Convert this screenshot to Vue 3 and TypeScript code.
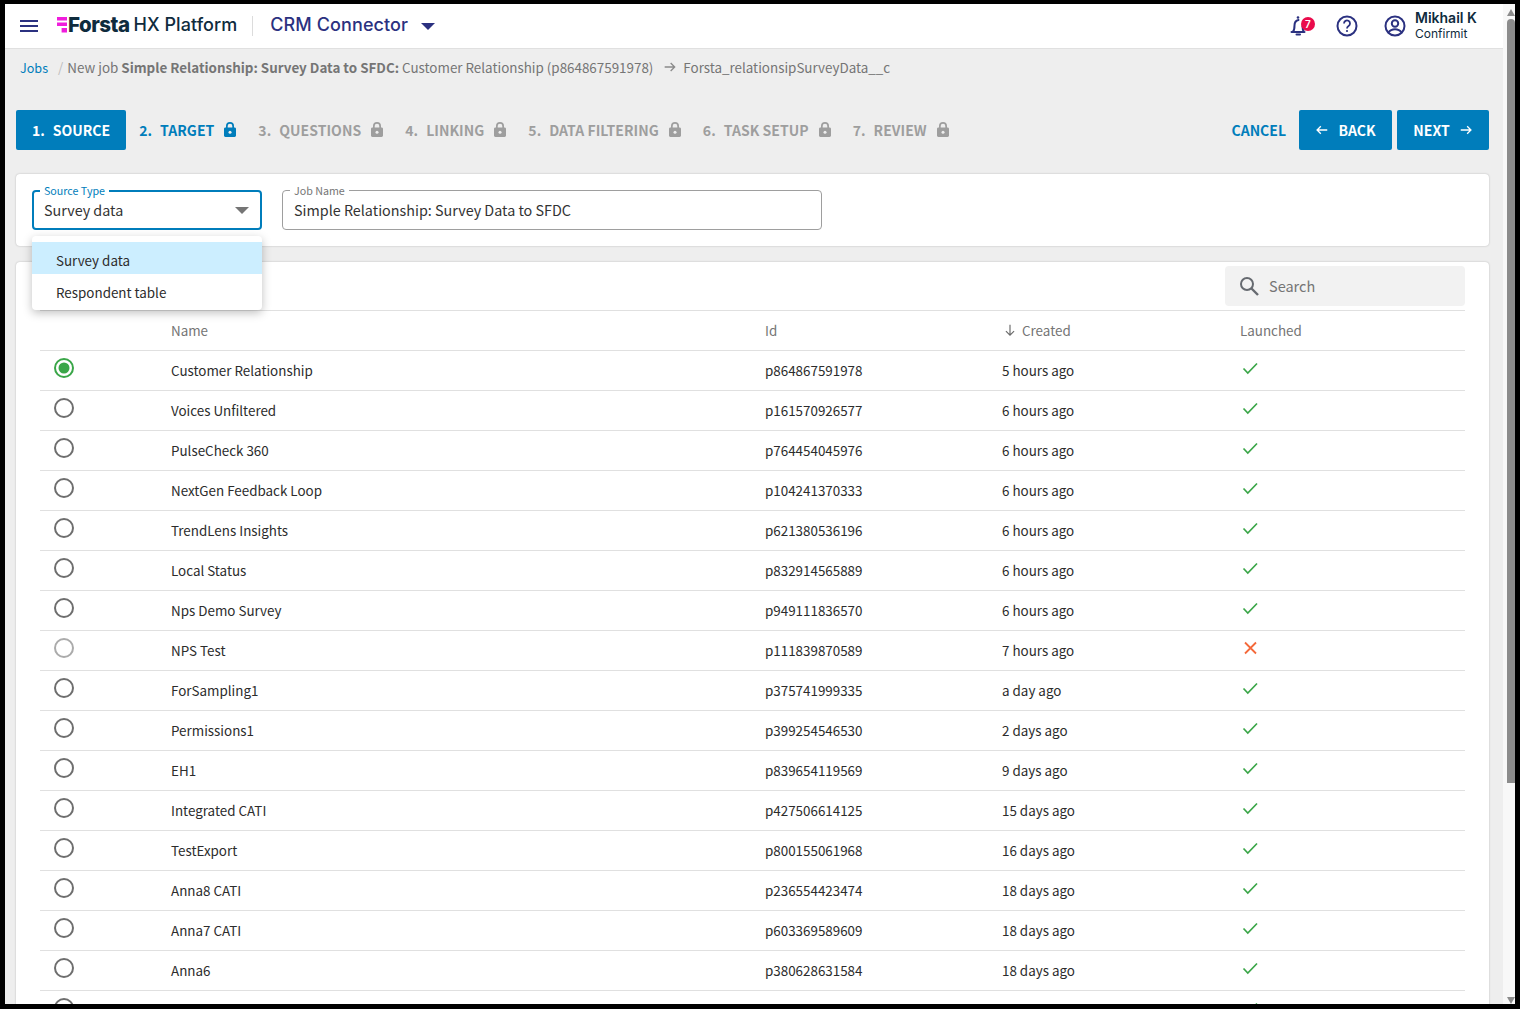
<template>
  <div class="frame">
    <div class="page">
      <header class="topbar">
        <svg class="burger" width="18" height="12" viewBox="0 0 18 12">
          <path d="M0 1h18M0 6h18M0 11h18" stroke="#2b3180" stroke-width="2" />
        </svg>
        <svg class="logo-mark" width="10" height="16" viewBox="0 0 10 16">
          <path d="M0 0h10v3.4H0zM0 5.6h10v3.4H0zM4.6 11h5.4v4.4H4.6z" fill="#f01ddc" />
        </svg>
        <span class="wordmark">Forsta</span>
        <span class="platform">HX Platform</span>
        <span class="divider"></span>
        <span class="product">CRM Connector</span>
        <span class="product-caret"></span>
        <div class="top-right">
          <div class="bell">
            <svg width="24" height="24" viewBox="0 0 24 24" fill="none" stroke="#2b3180" stroke-width="2">
              <path d="M1.500 18h13M2.800 18c1.500-1.500 1.700-3.500 1.700-6.500 0-3 1.500-5 4-5.500M12.500 12c0 3 .2 4.500 1.500 6" stroke-linecap="round" />
              <path d="M6.500 20.500h3.500" stroke-linecap="round" />
              <circle cx="8" cy="3.500" r="1.300" fill="#2b3180" stroke="none" />
            </svg>
            <span class="badge">7</span>
          </div>
          <svg class="help" width="24" height="24" viewBox="0 0 24 24" fill="none" stroke="#2b3180" stroke-width="2">
            <circle cx="12" cy="12" r="9.500" />
            <path d="M9 9.500a3 3 0 1 1 4.600 2.500c-1 .7-1.600 1.300-1.600 2.500" stroke-width="1.800" />
            <circle cx="12" cy="17" r="1.100" fill="#2b3180" stroke="none" />
          </svg>
          <svg class="account" width="24" height="24" viewBox="0 0 24 24" fill="none" stroke="#2b3180" stroke-width="2">
            <circle cx="12" cy="12" r="9.500" />
            <circle cx="12" cy="9.500" r="3.200" />
            <path d="M5.500 18.500c1.500-2.300 4-3.300 6.500-3.300s5 1 6.500 3.300" />
          </svg>
          <div class="user">
            <div class="user-name">Mikhail K</div>
            <div class="user-org">Confirmit</div>
          </div>
        </div>
      </header>

      <nav class="crumbs">
        <a class="crumb-link">Jobs</a>
        <span class="crumb-sep">/</span>
        <span>New job <b>Simple Relationship: Survey Data to SFDC:</b> Customer Relationship (p864867591978)</span>
        <svg class="crumb-arrow" width="16" height="16" viewBox="0 0 24 24" fill="none" stroke="#8a8a8a" stroke-width="2">
          <path d="M4 12h15M13 6l6 6-6 6" />
        </svg>
        <span>Forsta_relationsipSurveyData__c</span>
      </nav>

      <section class="stepper">
        <div class="step active"><span class="num">1.</span>SOURCE</div>
        <div
          v-for="step in lockedSteps"
          :key="step.num"
          :class="['step', { ready: step.num === 2 }]"
        >
          <span class="num">{{ step.num }}.</span>{{ step.label }}
          <svg class="lock" width="12" height="15" viewBox="0 0 12 15">
            <path
              d="M2 5.500V4a4 4 0 0 1 8 0v1.500h.6c.8 0 1.400.6 1.400 1.400v6.700c0 .8-.6 1.400-1.400 1.400H1.400C.6 15 0 14.400 0 13.600V6.900c0-.8.6-1.400 1.400-1.400zM3.700 5.500h4.600V4a2.300 2.300 0 0 0-4.600 0z"
              fill="currentColor"
            />
            <circle cx="6" cy="10.200" r="1.500" fill="#eeeeee" />
          </svg>
        </div>
        <div class="actions">
          <span class="cancel">CANCEL</span>
          <button class="action back">
            <svg width="14" height="14" viewBox="0 0 24 24" fill="none" stroke="#fff" stroke-width="2.200">
              <path d="M21 12H4M10 5.500L3.500 12l6.500 6.500" />
            </svg>
            BACK
          </button>
          <button class="action next">
            NEXT
            <svg width="14" height="14" viewBox="0 0 24 24" fill="none" stroke="#fff" stroke-width="2.200">
              <path d="M3 12h17M14 5.500l6.500 6.500-6.500 6.500" />
            </svg>
          </button>
        </div>
      </section>

      <section class="card form-card">
        <div class="field source">
          <span class="field-label">Source Type</span>
          <span>Survey data</span>
          <span class="select-caret"></span>
        </div>
        <div class="field job">
          <span class="field-label">Job Name</span>
          <span>Simple Relationship: Survey Data to SFDC</span>
        </div>
        <ul class="menu">
          <li class="menu-item selected">Survey data</li>
          <li class="menu-item">Respondent table</li>
        </ul>
      </section>

      <section class="card table-card">
        <div class="toolbar">
          <div class="search">
            <svg width="24" height="24" viewBox="0 0 24 24" fill="none" stroke="#666a70" stroke-width="2">
              <circle cx="10" cy="10" r="6" />
              <path d="M14.500 14.500L21 21" stroke-width="2.400" />
            </svg>
            <span class="search-text">Search</span>
          </div>
        </div>
        <div class="row head">
          <span></span>
          <span>Name</span>
          <span>Id</span>
          <span class="created">
            <svg width="14" height="14" viewBox="0 0 24 24" fill="none" stroke="#6b6b6b" stroke-width="2">
              <path d="M12 3v18M5 14l7 7 7-7" />
            </svg>
            Created
          </span>
          <span>Launched</span>
        </div>
        <div v-for="(job, index) in jobs" :key="index" class="row">
          <span class="radio-cell">
            <svg width="20" height="20" viewBox="0 0 20 20" fill="none">
              <circle cx="10" cy="10" r="9" stroke-width="2" :stroke="radioColor(job, index)" />
              <circle v-if="index === 0" cx="10" cy="10" r="5.500" fill="#3aa648" />
            </svg>
          </span>
          <span>{{ job.name }}</span>
          <span>{{ job.id }}</span>
          <span>{{ job.created }}</span>
          <span class="status-cell">
            <svg v-if="job.launched" width="18" height="18" viewBox="0 0 18 18" fill="none" stroke="#3aa648" stroke-width="1.700">
              <path d="M2.500 9.500l4.300 4.500L16 4.500" />
            </svg>
            <svg v-else width="18" height="18" viewBox="0 0 18 18" fill="none" stroke="#f4693a" stroke-width="1.800">
              <path d="M4 3.500l11 11M15 3.500l-11 11" />
            </svg>
          </span>
        </div>
      </section>
    </div>

    <aside class="scrollbar">
      <span class="arrow up"></span>
      <span class="thumb"></span>
      <span class="arrow down"></span>
    </aside>
  </div>
</template>

<script setup lang="ts">
type Job = {
  name: string
  id: string
  created: string
  launched: boolean
}

const lockedSteps = [
  { num: 2, label: 'TARGET' },
  { num: 3, label: 'QUESTIONS' },
  { num: 4, label: 'LINKING' },
  { num: 5, label: 'DATA FILTERING' },
  { num: 6, label: 'TASK SETUP' },
  { num: 7, label: 'REVIEW' },
]

const jobs: Job[] = [
  { name: 'Customer Relationship', id: 'p864867591978', created: '5 hours ago', launched: true },
  { name: 'Voices Unfiltered', id: 'p161570926577', created: '6 hours ago', launched: true },
  { name: 'PulseCheck 360', id: 'p764454045976', created: '6 hours ago', launched: true },
  { name: 'NextGen Feedback Loop', id: 'p104241370333', created: '6 hours ago', launched: true },
  { name: 'TrendLens Insights', id: 'p621380536196', created: '6 hours ago', launched: true },
  { name: 'Local Status', id: 'p832914565889', created: '6 hours ago', launched: true },
  { name: 'Nps Demo Survey', id: 'p949111836570', created: '6 hours ago', launched: true },
  { name: 'NPS Test', id: 'p111839870589', created: '7 hours ago', launched: false },
  { name: 'ForSampling1', id: 'p375741999335', created: 'a day ago', launched: true },
  { name: 'Permissions1', id: 'p399254546530', created: '2 days ago', launched: true },
  { name: 'EH1', id: 'p839654119569', created: '9 days ago', launched: true },
  { name: 'Integrated CATI', id: 'p427506614125', created: '15 days ago', launched: true },
  { name: 'TestExport', id: 'p800155061968', created: '16 days ago', launched: true },
  { name: 'Anna8 CATI', id: 'p236554423474', created: '18 days ago', launched: true },
  { name: 'Anna7 CATI', id: 'p603369589609', created: '18 days ago', launched: true },
  { name: 'Anna6', id: 'p380628631584', created: '18 days ago', launched: true },
  // only the radio and tick of this row show above the window edge
  { name: '', id: '', created: '', launched: true },
]

function radioColor(job: Job, index: number) {
  if (index === 0) return '#3aa648'
  return job.launched ? '#6e6e6e' : '#ababab'
}
</script>

<style scoped>
.frame {
  display: flex;
  box-sizing: border-box;
  height: 1009px;
  overflow: hidden;
  border-style: solid;
  border-color: #000;
  border-width: 4px 5px 5px 5px;
  font-family: 'Noto Sans CJK SC', 'Open Sans', sans-serif;
  font-size: 13.400px;
  color: #2c2c2c;
}

.page {
  flex: 1;
  min-width: 0;
  background: #eeeeee;
}

.topbar {
  display: flex;
  align-items: center;
  height: 44px;
  background: #fff;
  border-bottom: 1px solid #e0e0e0;
  font-family: Inter, sans-serif;
}
.burger {
  margin-left: 15px;
}
.logo-mark {
  margin: 0 0 3px 19px;
}
.wordmark {
  margin: 0 0 3px 1px;
  font-size: 20.500px;
  font-weight: 800;
  letter-spacing: -0.5px;
  color: #0f2b3d;
}
.platform {
  margin: 0 0 3px 4px;
  font-size: 18px;
  font-weight: 500;
  letter-spacing: 0.05px;
  color: #0f2b3d;
}
.divider {
  width: 1px;
  height: 20px;
  margin-left: 15px;
  background: #dcdcdc;
}
.product {
  margin: 0 0 3px 17px;
  font-size: 18px;
  font-weight: 500;
  letter-spacing: 0.1px;
  color: #2b3180;
}
.product-caret {
  width: 0;
  height: 0;
  margin-left: 13px;
  border-left: 7px solid transparent;
  border-right: 7px solid transparent;
  border-top: 7px solid #2b3180;
}
.top-right {
  display: flex;
  align-items: center;
  margin-left: auto;
}
.bell {
  position: relative;
  width: 24px;
  height: 24px;
  margin-right: 1px;
}
.badge {
  position: absolute;
  top: 3px;
  left: 11px;
  width: 14px;
  height: 14px;
  border-radius: 50%;
  background: #ea0b4c;
  color: #fff;
  font-size: 10px;
  font-weight: 600;
  line-height: 14px;
  text-align: center;
}
.help {
  margin-left: 20px;
}
.account {
  margin-left: 24px;
}
.user {
  width: 88px;
  margin: 0 0 2px 8px;
  color: #0f2b3d;
}
.user-name {
  font-size: 14px;
  font-weight: 600;
  line-height: 17px;
}
.user-org {
  font-size: 12px;
  line-height: 16px;
}

.crumbs {
  display: flex;
  align-items: center;
  height: 36px;
  padding: 0 0 3px 15px;
  color: #757575;
  white-space: pre;
}
.crumbs b {
  font-weight: 700;
}
.crumb-link {
  font-size: 12.600px;
  color: #007dbb;
}
.crumb-sep {
  margin: 0 4px 0 10px;
  color: #bdbdbd;
}
.crumb-arrow {
  margin: 0 5px 0 9px;
}

.stepper {
  display: flex;
  align-items: center;
  height: 40px;
  margin: 22px 14px 0 11px;
  font-size: 14px;
  font-weight: 700;
  color: #9e9e9e;
}
.step {
  display: flex;
  align-items: center;
  height: 40px;
  padding-right: 22px;
  letter-spacing: 0.04px;
  white-space: nowrap;
}
.step.active {
  padding: 0 16px;
  margin-right: 13px;
  border-radius: 2px;
  background: #007dbb;
  color: #fff;
  letter-spacing: 0;
}
.step.ready {
  color: #007dbb;
}
.num {
  margin-right: 8px;
}
.lock {
  margin-left: 10px;
  margin-bottom: 1px;
}
.actions {
  display: flex;
  align-items: center;
  margin-left: auto;
}
.cancel {
  margin-right: 13px;
  color: #007dbb;
}
.action {
  display: flex;
  align-items: center;
  justify-content: center;
  gap: 9px;
  height: 40px;
  padding: 0;
  border: 0;
  border-radius: 2px;
  background: #007dbb;
  color: #fff;
  font: inherit;
}
.back {
  width: 93px;
  margin-right: 5px;
}
.next {
  width: 92px;
}

.card {
  position: relative;
  margin: 0 14px 0 11px;
  border-radius: 4px;
  background: #fff;
  box-shadow: 0 0 2px rgba(0, 0, 0, 0.25);
}
.form-card {
  display: flex;
  gap: 20px;
  box-sizing: border-box;
  height: 72px;
  margin-top: 24px;
  padding: 16px;
}
.field {
  position: relative;
  display: flex;
  align-items: center;
  box-sizing: border-box;
  height: 40px;
  padding: 0 0 2px 11px;
  border: 1px solid #9e9e9e;
  border-radius: 4px;
  font-size: 14.350px;
  color: #333;
}
.field.source {
  width: 230px;
  border: 2px solid #007dbb;
  padding-left: 10px;
}
.field.job {
  width: 540px;
}
.field-label {
  position: absolute;
  top: -6px;
  left: 7px;
  padding: 0 4px;
  background: #fff;
  font-size: 10.700px;
  line-height: 12px;
  color: #757575;
}
.source .field-label {
  top: -7px;
  left: 6px;
  color: #007dbb;
}
.select-caret {
  position: absolute;
  right: 11px;
  top: 15px;
  width: 0;
  height: 0;
  border-left: 7px solid transparent;
  border-right: 7px solid transparent;
  border-top: 7px solid #757575;
}
.menu {
  position: absolute;
  z-index: 5;
  top: 62px;
  left: 16px;
  width: 230px;
  margin: 0;
  padding: 6px 0 4px;
  list-style: none;
  border-radius: 4px;
  background: #fff;
  box-shadow: 0 3px 10px rgba(0, 0, 0, 0.25);
}
.menu-item {
  height: 32px;
  padding-left: 24px;
  line-height: 37px;
}
.menu-item.selected {
  background: #cceeff;
}

.table-card {
  margin-top: 16px;
  padding: 0 24px;
}
.toolbar {
  display: flex;
  justify-content: flex-end;
  height: 49px;
  padding-top: 4px;
  box-sizing: border-box;
  border-bottom: 1px solid #e0e0e0;
}
.search {
  display: flex;
  align-items: center;
  gap: 8px;
  box-sizing: border-box;
  width: 240px;
  height: 40px;
  padding-left: 12px;
  border-radius: 4px;
  background: #f2f2f2;
  font-size: 14.500px;
  color: #757575;
}
.search-text {
  margin-bottom: 2px;
}
.row {
  display: grid;
  grid-template-columns: 131px 594px 237px 238px 1fr;
  align-items: center;
  box-sizing: border-box;
  height: 40px;
  padding-bottom: 2px;
  border-bottom: 1px solid #e0e0e0;
  line-height: 20px;
}
.head {
  color: #757575;
}
.created {
  display: flex;
  align-items: center;
  gap: 5px;
  margin-left: 1px;
}
.radio-cell {
  display: flex;
  align-self: start;
  padding: 7px 0 0 14px;
}
.status-cell {
  display: flex;
  align-self: start;
  padding-top: 8px;
  margin-left: 1px;
}

.scrollbar {
  position: relative;
  flex: none;
  width: 12px;
  background: #f8f8f8;
}
.thumb {
  position: absolute;
  top: 15px;
  right: 0;
  width: 8px;
  height: 764px;
  border-radius: 4px 4px 0 0;
  background: #8c8c8c;
}
.arrow {
  position: absolute;
  right: 0;
  width: 0;
  height: 0;
  border-left: 4px solid transparent;
  border-right: 4px solid transparent;
}
.arrow.up {
  top: 5px;
  border-bottom: 7px solid #8c8c8c;
}
.arrow.down {
  bottom: 0;
  border-top: 7px solid #8c8c8c;
}
</style>
